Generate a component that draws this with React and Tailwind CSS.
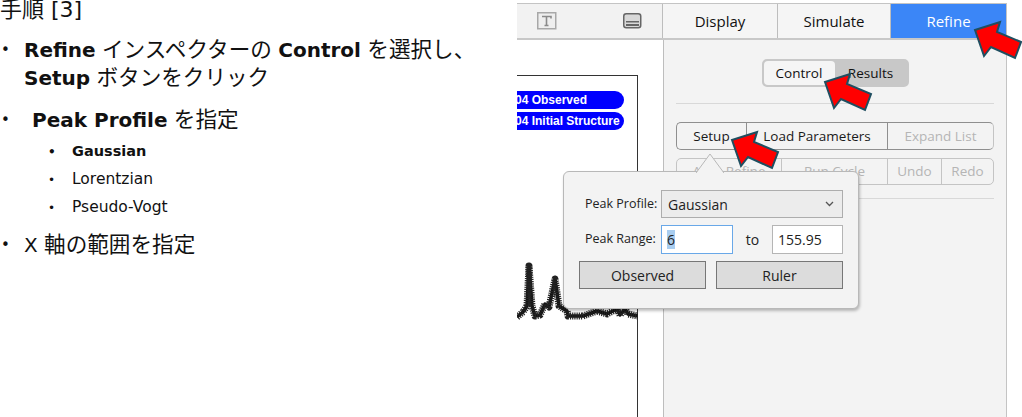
import React from "react";

const sans = "font-['DejaVu_Sans','Noto_Sans_CJK_JP',sans-serif]";
const ui = "font-['Open_Sans','Noto_Sans',sans-serif]";

function Arrow({ className }) {
  return (
    <svg className={`absolute ${className}`} width="50" height="40" viewBox="-2 -10 50 40">
      <polygon points="0,0 25,-8 22,2 46,12 40,28 16,17 9,26" fill="#ff0000" stroke="#1f4e60" strokeWidth="2" />
    </svg>
  );
}

function J({ children }) {
  return <span className="text-[21.6px]">{children}</span>;
}

function Bullet({ children, className = "" }) {
  return (
    <li className={`flex ${className}`}>
      <span className="w-6 shrink-0 pl-[1px] text-[15px]">•</span>
      <span>{children}</span>
    </li>
  );
}

function Sub({ children, className = "" }) {
  return (
    <li className={`flex h-7 items-center ${className}`}>
      <span className="ml-12 w-6 shrink-0 text-[12px]">•</span>
      <span>{children}</span>
    </li>
  );
}

function Seg({ className = "", disabled, children }) {
  return (
    <div className={`flex items-center justify-center border-r border-[#8f8f8f] last:border-r-0 ${disabled ? "text-[#b5b5b5] border-[#c4c4c4]" : "text-[#1a1a1a]"} ${className}`}>
      {children}
    </div>
  );
}

function Tab({ className = "", children }) {
  return <div className={`flex items-center justify-center border-r border-[#bdbdbd] text-[15px] ${className}`}>{children}</div>;
}

const peak = "M517 318L523 313L527 307L529 267L532 307L535 317L540 316L545 305L549 308L555 280L559 307L567 312L568 317L583 317L597 312L607 315L617 310L620 316L625 310L628 315L638 317";

export default function App() {
  return (
    <div className="relative flex h-[417px] w-[1022px] overflow-hidden bg-white text-[#111]">
      <div className={`w-[517px] shrink-0 ${sans}`}>
        <div className="mt-[-4px] text-[22px] leading-7">手順 [3]</div>
        <ul className="mt-[12px] text-[20px]">
          <Bullet className="leading-[28px]">
            <span className="block w-[480px]">
              <b>Refine</b> <J>インスペクターの</J> <b>Control</b> <J>を選択し、</J>
              <br />
              <b>Setup</b> <J>ボタンをクリック</J>
            </span>
          </Bullet>
          <Bullet className="mt-[14px] leading-[28px]">
            <span className="pl-2"><b>Peak Profile</b> <J>を指定</J></span>
          </Bullet>
        </ul>
        <ul className="mt-[4px] text-[15.5px]">
          <Sub className="text-[14.5px] font-bold">Gaussian</Sub>
          <Sub>Lorentzian</Sub>
          <Sub>Pseudo-Vogt</Sub>
        </ul>
        <ul className="mt-[9px] text-[20px]">
          <Bullet className="leading-[28px]">X <J>軸の範囲を指定</J></Bullet>
        </ul>
      </div>

      <div className={`mt-[3px] flex h-[414px] w-[490px] shrink-0 flex-col border-r border-t border-[#c4c4c4] ${ui}`}>
        <div className="flex h-[36px] shrink-0 border-b-2 border-[#c8c8c8]">
          <div className="flex w-[146px] items-center justify-between border-r border-[#bdbdbd] bg-[#f2f2f2] pl-[20px] pr-[20px]">
            <svg width="20" height="18" viewBox="0 0 20 18">
              <rect x="0.75" y="0.75" width="18" height="16" fill="#eee" stroke="#a8a8a8" strokeWidth="1.5" />
              <path d="M5 4.5h9v2M9.5 4.5v9M7.5 13.5h4" fill="none" stroke="#8a8a8a" strokeWidth="1.6" />
            </svg>
            <svg width="19" height="16" viewBox="0 0 19 16">
              <rect x="0.75" y="0.75" width="17" height="14" rx="2.5" fill="#d8d8d8" stroke="#666" strokeWidth="1.5" />
              <rect x="3" y="8" width="13" height="1.5" fill="#666" />
              <rect x="3" y="11" width="13" height="2" fill="#666" />
            </svg>
          </div>
          <Tab className="w-[115px] bg-[#f5f5f5]">Display</Tab>
          <Tab className="w-[113px] bg-[#f5f5f5]">Simulate</Tab>
          <Tab className="flex-1 border-r-0 bg-[#3b86f7] text-white">Refine</Tab>
        </div>

        <div className="flex min-h-0 flex-1">
          <div className="w-[146px] shrink-0 overflow-hidden bg-white">
            <div className="ml-[-20px] mt-[35px] flex h-[400px] w-[141px] flex-col border border-[#333]">
              <div className="ml-[-1px] mt-[15px] flex h-[18px] w-[127px] items-center rounded-r-[9px] bg-[#0000ff] pb-[1px] pl-[18px] font-['Liberation_Sans',sans-serif] text-[12px] font-bold whitespace-nowrap text-white">
                04 Observed
              </div>
              <div className="ml-[-1px] mt-[3px] flex h-[18px] w-[127px] items-center rounded-r-[9px] bg-[#0000ff] pb-[1px] pl-[18px] font-['Liberation_Sans',sans-serif] text-[12px] font-bold whitespace-nowrap text-white">
                04 Initial Structure
              </div>
              <svg className="ml-[19px] mt-[131px] shrink-0" width="121" height="62" viewBox="517 262 121 62">
                <path d={peak} fill="none" stroke="#111" strokeWidth="3.5" strokeLinejoin="round" />
                <path d={peak} fill="none" stroke="#222" strokeWidth="7" strokeDasharray="1.2 1" strokeLinejoin="round" />
              </svg>
            </div>
          </div>

          <div className="flex-1 border-l border-[#bdbdbd] bg-[#f3f3f3] px-3 text-[13.5px]">
            <div className="mt-[19px] flex justify-center">
              <div className="flex h-[28px] w-[147px] rounded-[5px] border-2 border-[#c8c8c8] bg-[#c8c8c8]">
                <div className="flex w-[71px] items-center justify-center rounded-[4px] bg-[#f5f5f5]">Control</div>
                <div className="flex flex-1 items-center justify-center">Results</div>
              </div>
            </div>
            <div className="mt-[16px] h-px bg-[#d8d8d8]" />
            <div className="mt-[18px] flex h-[28px] rounded-[5px] border border-[#8f8f8f] border-r-[#c4c4c4]">
              <Seg className="w-[70px]">Setup</Seg>
              <Seg className="w-[141px]">Load Parameters</Seg>
              <Seg className="flex-1" disabled>Expand List</Seg>
            </div>
            <div className="mt-[8px] flex h-[27px] rounded-[5px] border border-[#c4c4c4]">
              <Seg className="w-[105px]" disabled>Auto Refine</Seg>
              <Seg className="w-[106px]" disabled>Run Cycle</Seg>
              <Seg className="w-[54px]" disabled>Undo</Seg>
              <Seg className="flex-1" disabled>Redo</Seg>
            </div>
            <div className="mt-[13px] h-px bg-[#d8d8d8]" />
          </div>
        </div>
      </div>

      <div className={`absolute left-[563px] top-[171px] h-[138px] w-[296px] rounded-[6px] border border-[#b8b8b8] bg-[#f3f3f3] pl-[15px] pt-[18px] text-[12.5px] text-[#222] shadow-[1px_2px_3px_rgba(0,0,0,0.25)] ${ui}`}>
        <svg className="absolute left-[132px] top-[-19px]" width="28" height="20" viewBox="0 0 28 20">
          <path d="M0 20L14 1L28 20" fill="#f3f3f3" stroke="#b8b8b8" />
        </svg>
        <div className="flex h-[28px] items-center">
          <span className="ml-[6px] w-[76px] whitespace-nowrap">Peak Profile:</span>
          <div className="flex h-[28px] w-[182px] items-center justify-between border border-[#adadad] bg-[#ececec] pl-[6px] pr-[8px] text-[14px]">
            Gaussian
            <svg width="9" height="6" viewBox="0 0 9 6"><path d="M1 1L4.5 4.5L8 1" fill="none" stroke="#555" strokeWidth="1.3" /></svg>
          </div>
        </div>
        <div className="mt-[7px] flex h-[29px] items-center">
          <span className="ml-[6px] w-[76px] whitespace-nowrap">Peak Range:</span>
          <div className="flex h-[29px] w-[72px] items-center border border-[#69a8e8] bg-white pl-[5px] text-[14px]">
            <span className="bg-[#a8cdf0] leading-[19px]">6</span>
          </div>
          <span className="w-[39px] text-center text-[14px]">to</span>
          <div className="flex h-[29px] w-[71px] items-center border border-[#b5b5b5] bg-white pl-[5px] text-[14px]">155.95</div>
        </div>
        <div className="mt-[7px] flex gap-[10px] text-[14px]">
          <div className="flex h-[28px] w-[127px] items-center justify-center border border-[#777] bg-[#dcdcdc]">Observed</div>
          <div className="flex h-[28px] w-[127px] items-center justify-center border border-[#777] bg-[#dcdcdc]">Ruler</div>
        </div>
      </div>

      <Arrow className="left-[973px] top-[20px]" />
      <Arrow className="left-[823px] top-[72px]" />
      <Arrow className="left-[730px] top-[130px]" />
    </div>
  );
}
